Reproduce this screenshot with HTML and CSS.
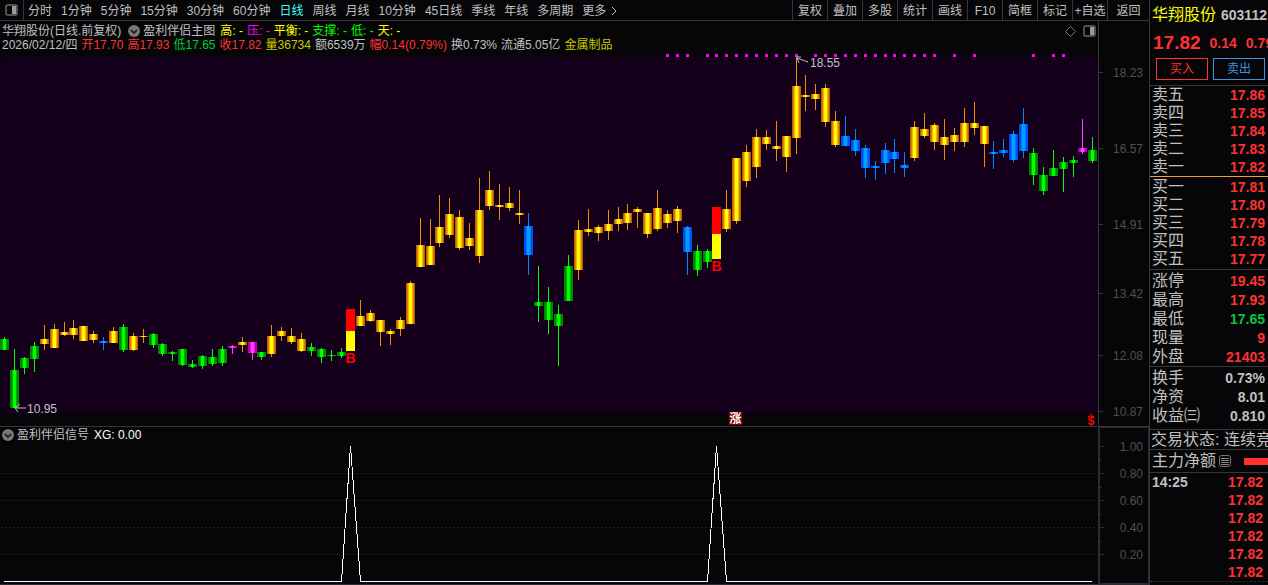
FILE: index.html
```html
<!DOCTYPE html>
<html lang="zh-CN">
<head>
<meta charset="utf-8">
<title>华翔股份 603112</title>
<link rel="stylesheet" href="styles.css">
</head>
<body>
<div class="app">
  <main class="board">
    <header class="toolbar">
      <button class="layout-btn" aria-label="布局">
        <svg width="13" height="12" viewBox="0 0 13 12"><rect x="1" y="1" width="11" height="10" rx="1" fill="none" stroke="#999"/><rect x="7" y="2" width="4" height="8" fill="#999"/></svg>
      </button>
      <nav class="periods">
        <button>分时</button><button>1分钟</button><button>5分钟</button><button>15分钟</button><button>30分钟</button><button>60分钟</button><button class="active">日线</button><button>周线</button><button>月线</button><button>10分钟</button><button>45日线</button><button>季线</button><button>年线</button><button>多周期</button><button class="more">更多<svg width="6" height="10" viewBox="0 0 6 10"><path d="M1 1L5 5L1 9" fill="none" stroke="#c0c0c0"/></svg></button>
      </nav>
      <div class="tools">
        <button>复权</button><button>叠加</button><button>多股</button><button>统计</button><button>画线</button><button>F10</button><button>简框</button><button>标记</button><button>+自选</button><button class="back">返回</button>
      </div>
    </header>

    <section class="info">
      <div class="info-text">
        <div class="line">
          <span class="title">华翔股份(日线.前复权)</span>
          <svg class="drop" width="12" height="12" viewBox="0 0 12 12"><circle cx="6" cy="6" r="6" fill="#777"/><path d="M3 5L6 8L9 5" fill="none" stroke="#111" stroke-width="1.5"/></svg>
          <span class="indicator">盈利伴侣主图</span>
          <span class="signals"><span class="yellow">高: -</span><span class="magenta">压: -</span><span class="yellow">平衡: -</span><span class="lime">支撑: -</span><span class="lime">低: -</span><span class="yellow">天: -</span></span>
          <span class="corner">
            <svg width="11" height="11" viewBox="0 0 11 11"><path d="M5.500 .5L10.500 5.500L5.500 10.500L.5 5.500Z" fill="none" stroke="#777"/></svg>
            <svg width="13" height="12" viewBox="0 0 13 12"><rect x="1" y="1" width="11" height="10" rx="1" fill="none" stroke="#999"/><rect x="7" y="2" width="4" height="8" fill="#999"/></svg>
          </span>
        </div>
        <div class="line quote">
          <span>2026/02/12/四</span><span class="red">开17.70</span><span class="red">高17.93</span><span class="green">低17.65</span><span class="red">收17.82</span><span class="gold">量36734</span><span>额6539万</span><span class="red">幅0.14(0.79%)</span><span>换0.73%</span><span>流通5.05亿</span><span class="gold">金属制品</span>
        </div>
      </div>
      <div class="axis-head"></div>
    </section>

    <svg class="chart" id="kline" viewBox="0 52 1149 375" role="img" aria-label="日线K线图">
      <defs>
        <linearGradient id="body-o"><stop offset="0" stop-color="#b06400"/><stop offset=".11" stop-color="#b06400"/><stop offset=".11" stop-color="#e08000"/><stop offset=".22" stop-color="#e08000"/><stop offset=".22" stop-color="#ffa818"/><stop offset=".33" stop-color="#ffa818"/><stop offset=".33" stop-color="#ffff00"/><stop offset=".67" stop-color="#ffff00"/><stop offset=".67" stop-color="#ffa818"/><stop offset=".78" stop-color="#ffa818"/><stop offset=".78" stop-color="#e08000"/><stop offset=".89" stop-color="#e08000"/><stop offset=".89" stop-color="#b06400"/></linearGradient>
        <linearGradient id="body-g"><stop offset="0" stop-color="#008000"/><stop offset=".22" stop-color="#008800"/><stop offset=".22" stop-color="#00b000"/><stop offset=".33" stop-color="#00b000"/><stop offset=".33" stop-color="#00ff00"/><stop offset=".67" stop-color="#00ff00"/><stop offset=".67" stop-color="#00b000"/><stop offset=".78" stop-color="#00b000"/><stop offset=".78" stop-color="#008800"/></linearGradient>
        <linearGradient id="body-b"><stop offset="0" stop-color="#0048f0"/><stop offset=".22" stop-color="#0050ff"/><stop offset=".22" stop-color="#0078ff"/><stop offset=".33" stop-color="#0078ff"/><stop offset=".33" stop-color="#00a0ff"/><stop offset=".67" stop-color="#00a0ff"/><stop offset=".67" stop-color="#0078ff"/><stop offset=".78" stop-color="#0078ff"/><stop offset=".78" stop-color="#0050ff"/></linearGradient>
        <linearGradient id="body-m"><stop offset="0" stop-color="#b000b0"/><stop offset=".22" stop-color="#b800b8"/><stop offset=".22" stop-color="#e010e0"/><stop offset=".33" stop-color="#e010e0"/><stop offset=".33" stop-color="#ff40ff"/><stop offset=".67" stop-color="#ff40ff"/><stop offset=".67" stop-color="#e010e0"/><stop offset=".78" stop-color="#e010e0"/><stop offset=".78" stop-color="#b800b8"/></linearGradient>
      </defs>
      <rect x="1" y="57" width="1097" height="357" fill="#14001a"/>
      <g id="candles" shape-rendering="crispEdges"></g>
      <path d="M15 408H26M15 408L20 404M15 408L18 412" class="pointer"/>
      <text x="27" y="413" class="mark">10.95</text>
      <path d="M797 58L808 62M796 57H801M797 58L799 63" class="pointer"/>
      <text x="810" y="67" class="mark">18.55</text>
      <text x="350.500" y="363" class="buy">B</text>
      <text x="716.500" y="271" class="buy">B</text>
      <rect x="729" y="412" width="13" height="13" fill="#800000"/>
      <text x="735.500" y="423" class="rise">涨</text>
      <text x="1091" y="425" class="dollar">$</text>
      <path d="M1088 417L1091 414L1094 417" fill="none" stroke="#f00"/>
      <path d="M1098.500 52V427M1099 72.500H1103M1099 148.500H1103M1099 224.500H1103M1099 293.500H1103M1099 355.500H1103M1099 411.500H1103M0 426.500H1149" stroke="#36363a" fill="none"/>
      <g class="scale"><text x="1143" y="77">18.23</text><text x="1143" y="153">16.57</text><text x="1143" y="229">14.91</text><text x="1143" y="298">13.42</text><text x="1143" y="360">12.08</text><text x="1143" y="416">10.87</text></g>
    </svg>

    <section class="info sub">
      <div class="info-text">
        <div class="line">
          <svg class="drop" width="12" height="12" viewBox="0 0 12 12"><circle cx="6" cy="6" r="6" fill="#777"/><path d="M3 5L6 8L9 5" fill="none" stroke="#111" stroke-width="1.5"/></svg>
          <span>盈利伴侣信号</span><span class="white">XG: 0.00</span>
        </div>
      </div>
      <div class="axis-head boxed"></div>
    </section>

    <svg class="chart" viewBox="0 443 1149 142" role="img" aria-label="盈利伴侣信号">
      <path d="M1 473.500H1096M1 500.500H1096M1 527.500H1096M1 554.500H1096" stroke="#37373b" stroke-dasharray="1 3" fill="none"/>
      <path d="M4 581.500H341.500L350.500 446L360.500 581.500H707.500L716.500 446L726.500 581.500H1092" stroke="#fff" fill="none" shape-rendering="crispEdges"/>
      <path d="M1099.500 443V583.500H1149M1098.500 443V584M1100 446.500H1104M1100 473.500H1104M1100 500.500H1104M1100 527.500H1104M1100 554.500H1104M1100 460.500H1102M1100 487.500H1102M1100 514.500H1102M1100 541.500H1102M1148.500 443V584M0 584.500H1149" stroke="#2c2c30" fill="none"/>
      <g class="scale"><text x="1143" y="451">1.00</text><text x="1143" y="478">0.80</text><text x="1143" y="505">0.60</text><text x="1143" y="532">0.40</text><text x="1143" y="559">0.20</text></g>
    </svg>
  </main>

  <aside class="panel">
    <div class="name"><span class="yellow">华翔股份</span><b>603112</b></div>
    <div class="price red"><strong>17.82</strong><b>0.14</b><b>0.79%</b></div>
    <div class="trade"><button class="bid">买入</button><button class="ask">卖出</button></div>
    <table class="asks">
      <tr><th>卖五</th><td>17.86</td></tr><tr><th>卖四</th><td>17.85</td></tr><tr><th>卖三</th><td>17.84</td></tr><tr><th>卖二</th><td>17.83</td></tr><tr><th>卖一</th><td>17.82</td></tr>
    </table>
    <table class="bids">
      <tr><th>买一</th><td>17.81</td></tr><tr><th>买二</th><td>17.80</td></tr><tr><th>买三</th><td>17.79</td></tr><tr><th>买四</th><td>17.78</td></tr><tr><th>买五</th><td>17.77</td></tr>
    </table>
    <table class="stats">
      <tr><th>涨停</th><td>19.45</td></tr><tr><th>最高</th><td>17.93</td></tr><tr><th>最低</th><td class="green">17.65</td></tr><tr><th>现量</th><td>9</td></tr><tr><th>外盘</th><td>21403</td></tr>
    </table>
    <table class="stats basics">
      <tr><th>换手</th><td>0.73%</td></tr><tr><th>净资</th><td>8.01</td></tr><tr><th>收益㈢</th><td>0.810</td></tr>
    </table>
    <div class="status">交易状态: 连续竞价</div>
    <div class="flow"><span>主力净额</span>
      <svg width="12" height="12" viewBox="0 0 12 12"><rect x=".5" y=".5" width="11" height="11" rx="2" fill="none" stroke="#777"/><path d="M2 3.500H10M2 5.500H10M2 7.500H10M2 9.500H10" stroke="#888"/></svg>
      <i class="bar"></i></div>
    <table class="ticks">
      <tr><th>14:25</th><td>17.82</td></tr><tr><th></th><td>17.82</td></tr><tr><th></th><td>17.82</td></tr><tr><th></th><td>17.82</td></tr><tr><th></th><td>17.82</td></tr><tr><th></th><td>17.82</td></tr>
    </table>
  </aside>
</div>
<script src="chart.js"></script>
</body>
</html>
```
FILE: styles.css
```css
* { box-sizing: border-box; }

body {
  margin: 0;
  background: #060608;
  color: #c0c0c0;
  font: 12px/14px "Liberation Sans", "Noto Sans CJK SC", sans-serif;
  overflow: hidden;
}

button {
  margin: 0;
  padding: 0;
  border: 0;
  background: none;
  color: inherit;
  font: inherit;
  white-space: nowrap;
}

svg { flex: none; }

.app {
  display: grid;
  grid-template-columns: minmax(0, 1fr) 119px;
  min-height: 100vh;
}

.red { color: #ff3232; }
.green { color: #00c83c; }
.lime { color: #00ff00; }
.yellow { color: #ffff00; }
.gold { color: #c8c800; }
.magenta { color: #ff00ff; }
.white { color: #ffffff; }

.toolbar {
  display: flex;
  height: 21px;
  border-bottom: 1px solid #36363a;
}

.toolbar button { padding-top: 1px; }

.toolbar .layout-btn {
  display: flex;
  align-items: center;
  justify-content: center;
  width: 24px;
  padding: 0;
  border-right: 1px solid #36363a;
}

.periods {
  display: flex;
  flex: 1;
  gap: 9px;
  padding-left: 4px;
  overflow: hidden;
}

.periods .active { color: #40ffff; }

.more {
  display: flex;
  align-items: center;
  gap: 5px;
}

.tools { display: flex; }

.tools button {
  width: 35px;
  border-left: 1px solid #36363a;
}

.tools .back { width: 42px; }

.info {
  display: grid;
  grid-template-columns: minmax(0, 1fr) 51px;
  height: 31px;
}

.axis-head { border-left: 1px solid #36363a; }

.info-text { padding: 3px 2px 0; }

.line {
  display: flex;
  align-items: center;
  height: 14px;
  white-space: nowrap;
}

.drop { margin: 0 3px 0 7px; }

.signals {
  display: flex;
  gap: 4px;
  padding-left: 5px;
}

.corner {
  display: flex;
  align-items: center;
  gap: 7px;
  margin-left: auto;
}

.quote { gap: 4px; }

.sub { height: 16px; }
.sub .info-text { padding-top: 1px; }
.sub .drop { margin-left: 0; }
.sub .white { margin-left: 5px; }

.axis-head.boxed {
  border: solid #2c2c30;
  border-width: 1px 1px 0 2px;
}

.chart {
  display: block;
  width: 100%;
  height: auto;
  overflow: visible;
}

.scale { fill: #505050; text-anchor: end; }
.mark { fill: #c0c0c0; }
.pointer { fill: none; stroke: #c0c0c0; }
.buy { fill: #ff0000; font-size: 14px; font-weight: bold; text-anchor: middle; }
.rise { fill: #ffffff; font-weight: bold; text-anchor: middle; }
.dollar { fill: #ff0000; font-weight: bold; text-anchor: middle; }

.panel {
  border-left: 1px solid #36363a;
  overflow: hidden;
  font-size: 16px;
  white-space: nowrap;
}

.panel b { font-size: 14px; }

.name {
  display: flex;
  align-items: center;
  gap: 5px;
  height: 29px;
  padding-left: 2px;
}

.price {
  display: flex;
  align-items: center;
  gap: 9px;
  height: 27px;
  padding-left: 3px;
}

.price strong { font-size: 19px; }

.trade {
  display: flex;
  gap: 5px;
  padding: 2px 3px 5px 6px;
  border-bottom: 1px solid #36363a;
}

.trade button {
  flex: 1;
  height: 22px;
  border: 1px solid;
  font-size: 12px;
}

.bid { color: #ff3232; }
.ask { color: #3d93e0; }

table {
  width: 100%;
  border-spacing: 0;
  border-bottom: 1px solid #36363a;
}

tr { height: 18px; }

th, td {
  padding: 0 3px 0 2px;
  line-height: 18px;
}

th { font-weight: normal; text-align: left; }

td {
  color: #ff3232;
  font-size: 14px;
  font-weight: bold;
  text-align: right;
}

td.green { color: #00c83c; }

.asks { border-bottom-color: #f0a030; }
.bids { padding: 1px 0; }
.stats { padding-top: 1px; }
.stats tr { height: 19px; }
.basics { padding-bottom: 4px; }
.basics td { color: #c0c0c0; }

.status {
  height: 20px;
  padding-left: 1px;
  line-height: 19px;
  border-bottom: 1px solid #36363a;
}

.flow {
  display: flex;
  align-items: center;
  gap: 3px;
  height: 23px;
  padding-left: 2px;
  border-bottom: 1px solid #36363a;
}

.bar {
  flex: 1;
  height: 7px;
  margin-left: 10px;
  background: #ff3232;
}

.ticks { border-bottom: 1px dotted #36363a; }
.ticks th { font-size: 14px; font-weight: bold; }
.ticks td { padding-right: 5px; }
```
FILE: chart.js
```js
// One entry per trading day: colour, wick top, body top, body bottom, wick bottom.
const days = `g337,339,350,350 g349,370,408,408 g357,358,368,374 g342,346,359,372 o325,339,344,350
o324,329,348,348 o322,332,335,336 o320,328,335,339 o326,326,341,341 o331,334,340,343
b337,341,343,350 o327,331,343,343 g324,327,350,352 o333,336,350,351 o329,336,337,343
g333,334,345,348 g343,344,354,356 g351,352,354,361 g349,349,365,366 g360,364,367,368
g355,356,366,369 g349,357,364,366 g346,349,363,366 m345,346,348,354 o337,342,345,352
m342,342,353,360 g352,352,357,360 o325,336,354,357 o327,331,336,341 o328,336,342,344
o333,339,351,352 g343,347,351,356 g348,349,357,363 g350,355,356,361 g348,352,356,358
s309,309,331,351 o300,316,326,326 o310,313,321,322 o320,320,332,346 o329,331,334,345
o317,320,329,336 o281,283,324,324 o218,245,267,267 o219,246,265,265 o195,227,243,247
o198,214,235,238 o210,217,248,250 o223,238,246,250 o178,210,256,263 o171,190,206,210
o184,205,207,220 o187,203,208,211 o190,213,215,224 b213,226,255,275 g266,302,306,322
g287,302,320,334 g305,314,326,366 g255,266,301,301 o220,230,270,280 o209,229,232,236
o225,227,233,241 o210,224,231,240 o207,219,224,231 o204,213,223,230 o207,209,212,228
o213,213,234,238 o190,208,229,231 o210,214,223,228 o206,209,221,233 b226,227,252,275
g245,251,270,276 g249,251,262,268 s207,207,234,259 o190,209,229,232 o158,158,221,224
o145,152,181,187 o129,137,167,178 o130,137,144,150 o121,146,149,161 o136,136,157,172
o58,86,138,154 o75,95,97,111 o84,94,99,110 o84,88,122,127 o111,121,145,147
b116,136,146,146 b129,140,151,156 b145,148,168,178 b161,166,168,180 b143,150,163,174
b139,152,159,173 b152,165,168,177 o121,127,158,161 o113,129,136,138 o123,125,142,150
o119,137,145,160 o128,135,142,151 o108,123,142,147 o102,123,128,135 o126,126,144,167
b141,152,154,169 b139,150,153,157 b131,134,160,162 b108,124,151,158 g148,153,175,185
g167,175,191,195 g150,168,176,176 g157,162,169,192 g156,160,163,177 m119,148,152,154
g137,150,161,163`.split(/\s+/);

const dotted = [67, 68, 69, 71, 72, 73, 74, 75, 76, 77, 78, 79, 80, 82, 83, 84, 85, 86,
  87, 88, 89, 90, 91, 92, 93, 94, 96, 98, 104, 106, 107];
const wick = { o: '#f08c00', g: '#00ff00', b: '#0088ff', m: '#ff40ff' };
// Ten units per day, with one unit dropped about every nine days.
const xOf = i => 4 + 10 * i - Math.floor((i + 2.5) / 9.25);
const rect = (x, top, w, bottom, fill) =>
  `<rect x="${x}" y="${top}" width="${w}" height="${bottom - top}" fill="${fill}"/>`;

let marks = '';
days.forEach((day, i) => {
  const kind = day[0];
  const [high, top, bottom, low] = day.slice(1).split(',').map(Number);
  const x = xOf(i);
  if (kind === 's') {
    marks += rect(x - 4, top, 9, bottom, '#ff0000') + rect(x - 4, bottom, 9, low, '#ffff00');
  } else {
    marks += rect(x, high, 1, low, wick[kind]) + rect(x - 4, top, 9, bottom, `url(#body-${kind})`);
  }
});
dotted.forEach(i => { marks += rect(xOf(i) - 1, 54, 3, 57, '#ff00ff'); });
document.getElementById('candles').innerHTML = marks;
```
